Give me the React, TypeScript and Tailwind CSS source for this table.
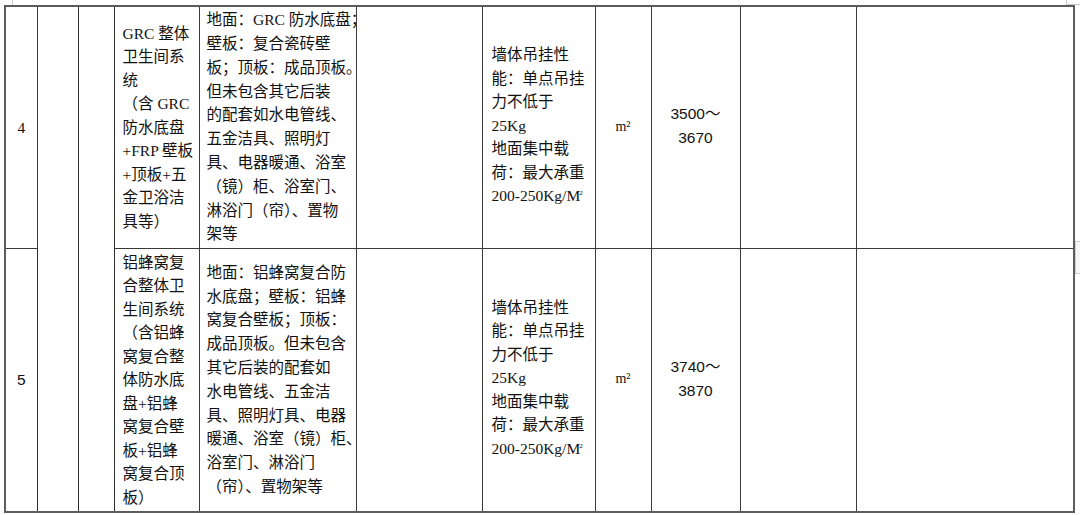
const serif = "font-['Liberation_Serif','Noto_Sans_CJK_SC',serif]"
const sans = "font-['Liberation_Sans','Noto_Sans_CJK_SC',sans-serif]"

interface Item {
  no: string
  name: string[]
  spec: string[]
  perf: string[]
  unit: string
  price: string[]
  height: string
}

const items: Item[] = [
  {
    no: "4",
    name: ["GRC 整体", "卫生间系", "统", "（含 GRC", "防水底盘", "+FRP 壁板", "+顶板+五", "金卫浴洁", "具等）"],
    spec: [
      "地面：GRC 防水底盘；",
      "壁板：复合瓷砖壁",
      "板；顶板：成品顶板。",
      "但未包含其它后装",
      "的配套如水电管线、",
      "五金洁具、照明灯",
      "具、电器暖通、浴室",
      "（镜）柜、浴室门、",
      "淋浴门（帘）、置物",
      "架等",
    ],
    perf: ["墙体吊挂性", "能：单点吊挂", "力不低于", "25Kg", "地面集中载", "荷：最大承重"],
    unit: "m²",
    price: ["3500～", "3670"],
    height: "h-[242px]",
  },
  {
    no: "5",
    name: [
      "铝蜂窝复",
      "合整体卫",
      "生间系统",
      "（含铝蜂",
      "窝复合整",
      "体防水底",
      "盘+铝蜂",
      "窝复合壁",
      "板+铝蜂",
      "窝复合顶",
      "板）",
    ],
    spec: [
      "地面：铝蜂窝复合防",
      "水底盘；壁板：铝蜂",
      "窝复合壁板；顶板：",
      "成品顶板。但未包含",
      "其它后装的配套如",
      "水电管线、五金洁",
      "具、照明灯具、电器",
      "暖通、浴室（镜）柜、",
      "浴室门、淋浴门",
      "（帘）、置物架等",
    ],
    perf: ["墙体吊挂性", "能：单点吊挂", "力不低于", "25Kg", "地面集中载", "荷：最大承重"],
    unit: "m²",
    price: ["3740～", "3870"],
    height: "h-[264px]",
  },
]

function Lines({ lines, className }: { lines: string[]; className?: string }) {
  return (
    <div className={className}>
      {lines.map((l, i) => (
        <div key={i} className="whitespace-nowrap">
          {l}
        </div>
      ))}
    </div>
  )
}

export default function App() {
  return (
    <div className="relative w-[1080px] h-[515px] bg-white overflow-hidden pl-[4px] pt-[5px] text-[#111]">
      {/* page edge marks */}
      <div className="absolute left-[12px] top-0 h-[5px] w-px bg-[#c8c8c8]" />
      <div className="absolute left-[1066px] top-0 h-[5px] w-px bg-[#c8c8c8]" />
      <div className="absolute left-[1066px] top-[4px] h-px w-[14px] bg-[#c8c8c8]" />
      <div className="absolute left-[1075px] top-[241px] h-[33px] w-[8px] border border-[#cfcfcf] bg-[#f7f7f7]" />

      <table className="table-fixed border-collapse w-[1070px] border-2 border-[#5c5c5c] text-[15.5px]">
        <colgroup>
          <col className="w-[32px]" />
          <col className="w-[41px]" />
          <col className="w-[36px]" />
          <col className="w-[85px]" />
          <col className="w-[157px]" />
          <col className="w-[126px]" />
          <col className="w-[113px]" />
          <col className="w-[56px]" />
          <col className="w-[89px]" />
          <col className="w-[116px]" />
          <col className="w-[218px]" />
        </colgroup>
        <tbody>
          {items.map((it, idx) => (
            <tr key={it.no} className={it.height}>
              <td className={`border border-[#3a3a3a] p-0 text-center align-middle ${idx === 0 ? serif : sans}`}>
                {it.no}
              </td>
              {idx === 0 && (
                <>
                  <td rowSpan={2} className="border border-[#2e2e2e] p-0" />
                  <td rowSpan={2} className="border border-[#2e2e2e] p-0" />
                </>
              )}
              <td className={`border border-[#3a3a3a] pl-[8px] pr-0 py-0 align-middle ${serif}`}>
                <Lines lines={it.name} className={idx === 0 ? "leading-[23.5px]" : "leading-[23.5px]"} />
              </td>
              <td className={`border border-[#3a3a3a] pl-[7px] pr-0 py-0 align-middle ${serif}`}>
                <Lines lines={it.spec} className="leading-[23.8px]" />
              </td>
              <td className="border border-[#3a3a3a] p-0" />
              <td className={`border border-[#3a3a3a] pl-[9px] pr-0 pt-0 pb-[4px] align-middle ${serif}`}>
                <div className="leading-[23.5px]">
                  <Lines lines={it.perf} />
                  <div className="whitespace-nowrap">
                    200-250Kg/M<span className="relative top-[-6px] -ml-px text-[7px] leading-none">2</span>
                  </div>
                </div>
              </td>
              <td className={`border border-[#3a3a3a] p-0 pb-[2px] text-center align-middle ${serif} text-[14px]`}>
                {it.unit}
              </td>
              <td className={`border border-[#3a3a3a] p-0 pb-[2px] text-center align-middle ${sans}`}>
                <Lines lines={it.price} className="leading-[24px]" />
              </td>
              <td className="border border-[#3a3a3a] p-0" />
              <td className="border border-[#3a3a3a] p-0" />
            </tr>
          ))}
        </tbody>
      </table>
    </div>
  )
}
